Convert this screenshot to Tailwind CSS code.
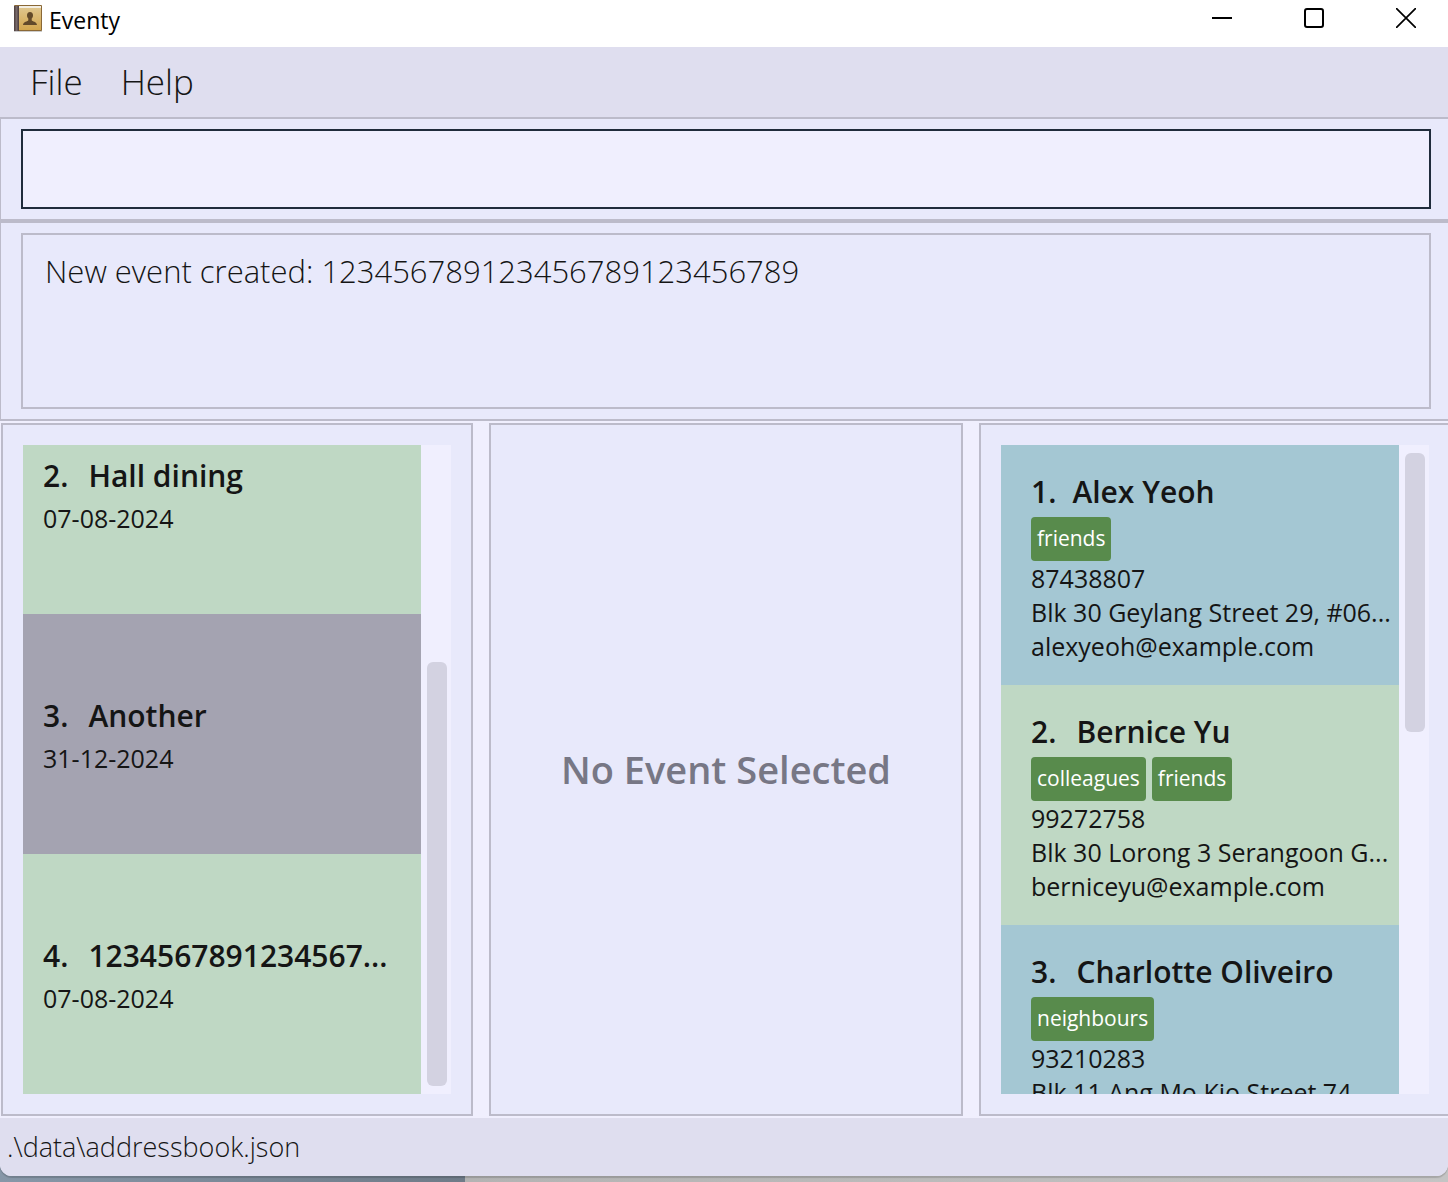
<!DOCTYPE html>
<html lang="en">
<head>
<meta charset="utf-8">
<title>Eventy</title>
<script src="https://cdn.jsdelivr.net/npm/@tailwindcss/browser@4"></script>
</head>
<body class="h-screen overflow-hidden bg-[linear-gradient(to_right,#8797a8_0,#6f7b88_465px,#b3b3b3_465px,#c4c4c4_100%)] pb-1.5 font-['Open_Sans',sans-serif] text-[#151515]">
<div class="flex h-full flex-col overflow-hidden rounded-b-xl bg-[#f0effe] shadow-[0_2px_1px_rgba(0,0,0,0.15)]">

  <header class="flex h-[47px] shrink-0 items-start justify-between bg-white pt-1">
    <div class="flex items-start pl-3.5">
      <svg class="h-[29px] w-7" viewBox="0 0 28 29" aria-hidden="true">
        <defs>
          <linearGradient id="cover" x1="0" y1="0" x2="0" y2="1"><stop offset="0" stop-color="#dfc58c"/><stop offset="1" stop-color="#d3a64e"/></linearGradient>
          <linearGradient id="spine" x1="0" y1="0" x2="1" y2="0"><stop offset="0" stop-color="#4b3d3b"/><stop offset=".5" stop-color="#77696a"/><stop offset="1" stop-color="#4a3b38"/></linearGradient>
        </defs>
        <rect x="0" y="26" width="28" height="2" fill="#000" opacity=".2"/>
        <rect x="0" y="1" width="28" height="26" rx="1" fill="#8a6836"/>
        <rect x="3" y="2" width="24" height="2" fill="#f3eee2"/>
        <rect x="5" y="4" width="22" height="22" fill="url(#cover)"/>
        <rect x="0" y="2" width="5" height="25" fill="url(#spine)"/>
        <path d="M16 8c-2 0-3 1.300-3 3.200 0 1.700.6 2.700 1.300 3.400v1.600c-.5 1.300-5 1.200-5.300 4.800h14c-.3-3.600-4.800-3.500-5.300-4.800v-1.600c.7-.7 1.300-1.700 1.300-3.400C19 9.300 18 8 16 8z" fill="#62492a"/>
      </svg>
      <h1 class="pl-[7px] text-[23px] leading-8 text-black">Eventy</h1>
    </div>
    <div class="flex gap-[52px] pr-[22px] text-black">
      <button class="flex h-7 w-10 items-center justify-center" aria-label="Minimize"><svg class="size-5" viewBox="0 0 20 20"><path d="M0 10h20" stroke="currentColor" stroke-width="2"/></svg></button>
      <button class="flex h-7 w-10 items-center justify-center" aria-label="Maximize"><svg class="size-5" viewBox="0 0 20 20"><rect x="1" y="1" width="18" height="18" rx="2" fill="none" stroke="currentColor" stroke-width="2"/></svg></button>
      <button class="flex h-7 w-10 items-center justify-center" aria-label="Close"><svg class="size-5" viewBox="0 0 20 20"><path d="M0 0l20 20M20 0L0 20" stroke="currentColor" stroke-width="1.700"/></svg></button>
    </div>
  </header>

  <nav class="flex h-[70px] shrink-0 items-center gap-[38px] bg-[#dfdeef] pl-[30px] text-[35px] font-light">
    <button>File</button>
    <button>Help</button>
  </nav>

  <form class="shrink-0 border-y-2 border-l border-[#bcbbca] bg-[#e8e9fb] py-2.5 pr-[17px] pl-5">
    <input type="text" aria-label="Command" class="block h-20 w-full border-2 border-[#202c3c] bg-[#f0effe] px-5 text-[31px] outline-none">
  </form>

  <section class="shrink-0 border-y-2 border-l border-[#bcbbca] bg-[#e8e9fb] py-2.5 pr-[17px] pl-5">
    <output class="block h-44 border-2 border-[#bcbbca] px-[22px] py-4 text-[31px] leading-10 font-light">New event created: 123456789123456789123456789</output>
  </section>

  <main class="grid min-h-0 flex-1 grid-cols-[472fr_474fr_469fr] gap-4 py-0.5 pl-px">
    <section aria-label="Events" class="flex min-h-0 min-w-0 border-2 border-[#bcbbca] bg-[#e8e9fb] p-5">
      <ul class="flex min-w-0 flex-1 flex-col justify-end overflow-hidden">
        <li class="flex h-60 shrink-0 flex-col justify-center bg-[#bfd8c4] px-5 pt-0.5">
          <h2 class="flex h-[46px] gap-5 text-3xl leading-[42px] font-semibold whitespace-nowrap"><span>2.</span><span>Hall dining</span></h2>
          <p class="text-[25px] leading-[34px]">07-08-2024</p>
        </li>
        <li class="flex h-60 shrink-0 flex-col justify-center bg-[#a4a3b1] px-5 pt-0.5">
          <h2 class="flex h-[46px] gap-5 text-3xl leading-[42px] font-semibold whitespace-nowrap"><span>3.</span><span>Another</span></h2>
          <p class="text-[25px] leading-[34px]">31-12-2024</p>
        </li>
        <li class="flex h-60 shrink-0 flex-col justify-center bg-[#bfd8c4] px-5 pt-0.5">
          <h2 class="flex h-[46px] gap-5 text-3xl leading-[42px] font-semibold whitespace-nowrap"><span>4.</span><span>1234567891234567...</span></h2>
          <p class="text-[25px] leading-[34px]">07-08-2024</p>
        </li>
      </ul>
      <div class="flex w-[30px] flex-col justify-end bg-[#f0effe] py-2 pr-1 pl-1.5">
        <div class="h-[67%] rounded-md bg-[#d3d2e1]"></div>
      </div>
    </section>

    <section aria-label="Event details" class="flex min-w-0 items-center justify-center border-2 border-[#bcbbca] bg-[#e8e9fb]">
      <p class="text-[38px] font-semibold whitespace-nowrap text-[#777785]">No Event Selected</p>
    </section>

    <section aria-label="Persons" class="flex min-h-0 min-w-0 border-2 border-r-0 border-[#bcbbca] bg-[#e8e9fb] py-5 pr-[19px] pl-5">
      <ul class="flex min-w-0 flex-1 flex-col overflow-hidden">
        <li class="h-60 shrink-0 bg-[#a4c7d3] pt-[26px] pl-[30px] text-[25px] leading-[34px] whitespace-nowrap">
          <h2 class="flex h-[46px] gap-4 text-3xl leading-[42px] font-semibold"><span>1.</span><span>Alex Yeoh</span></h2>
          <div class="flex h-11 gap-1.5 text-[21px] leading-[42px] font-medium text-white"><span class="rounded-sm bg-[#588b4c] px-1.5">friends</span></div>
          <p>87438807</p>
          <p>Blk 30 Geylang Street 29, #06...</p>
          <p>alexyeoh@example.com</p>
        </li>
        <li class="h-60 shrink-0 bg-[#bfd8c4] pt-[26px] pl-[30px] text-[25px] leading-[34px] whitespace-nowrap">
          <h2 class="flex h-[46px] gap-5 text-3xl leading-[42px] font-semibold"><span>2.</span><span>Bernice Yu</span></h2>
          <div class="flex h-11 gap-1.5 text-[21px] leading-[42px] font-medium text-white"><span class="rounded-sm bg-[#588b4c] px-1.5">colleagues</span><span class="rounded-sm bg-[#588b4c] px-1.5">friends</span></div>
          <p>99272758</p>
          <p>Blk 30 Lorong 3 Serangoon G...</p>
          <p>berniceyu@example.com</p>
        </li>
        <li class="h-60 shrink-0 bg-[#a4c7d3] pt-[26px] pl-[30px] text-[25px] leading-[34px] whitespace-nowrap">
          <h2 class="flex h-[46px] gap-5 text-3xl leading-[42px] font-semibold"><span>3.</span><span>Charlotte Oliveiro</span></h2>
          <div class="flex h-11 gap-1.5 text-[21px] leading-[42px] font-medium text-white"><span class="rounded-sm bg-[#588b4c] px-1.5">neighbours</span></div>
          <p>93210283</p>
          <p>Blk 11 Ang Mo Kio Street 74,</p>
        </li>
      </ul>
      <div class="w-[30px] bg-[#f0effe] py-2 pr-1 pl-1.5">
        <div class="h-[44%] rounded-md bg-[#d3d2e1]"></div>
      </div>
    </section>
  </main>

  <footer class="flex h-[58px] shrink-0 items-center bg-[#dfdeef] px-[7px] text-[27px] font-light">.\data\addressbook.json</footer>
</div>
</body>
</html>
